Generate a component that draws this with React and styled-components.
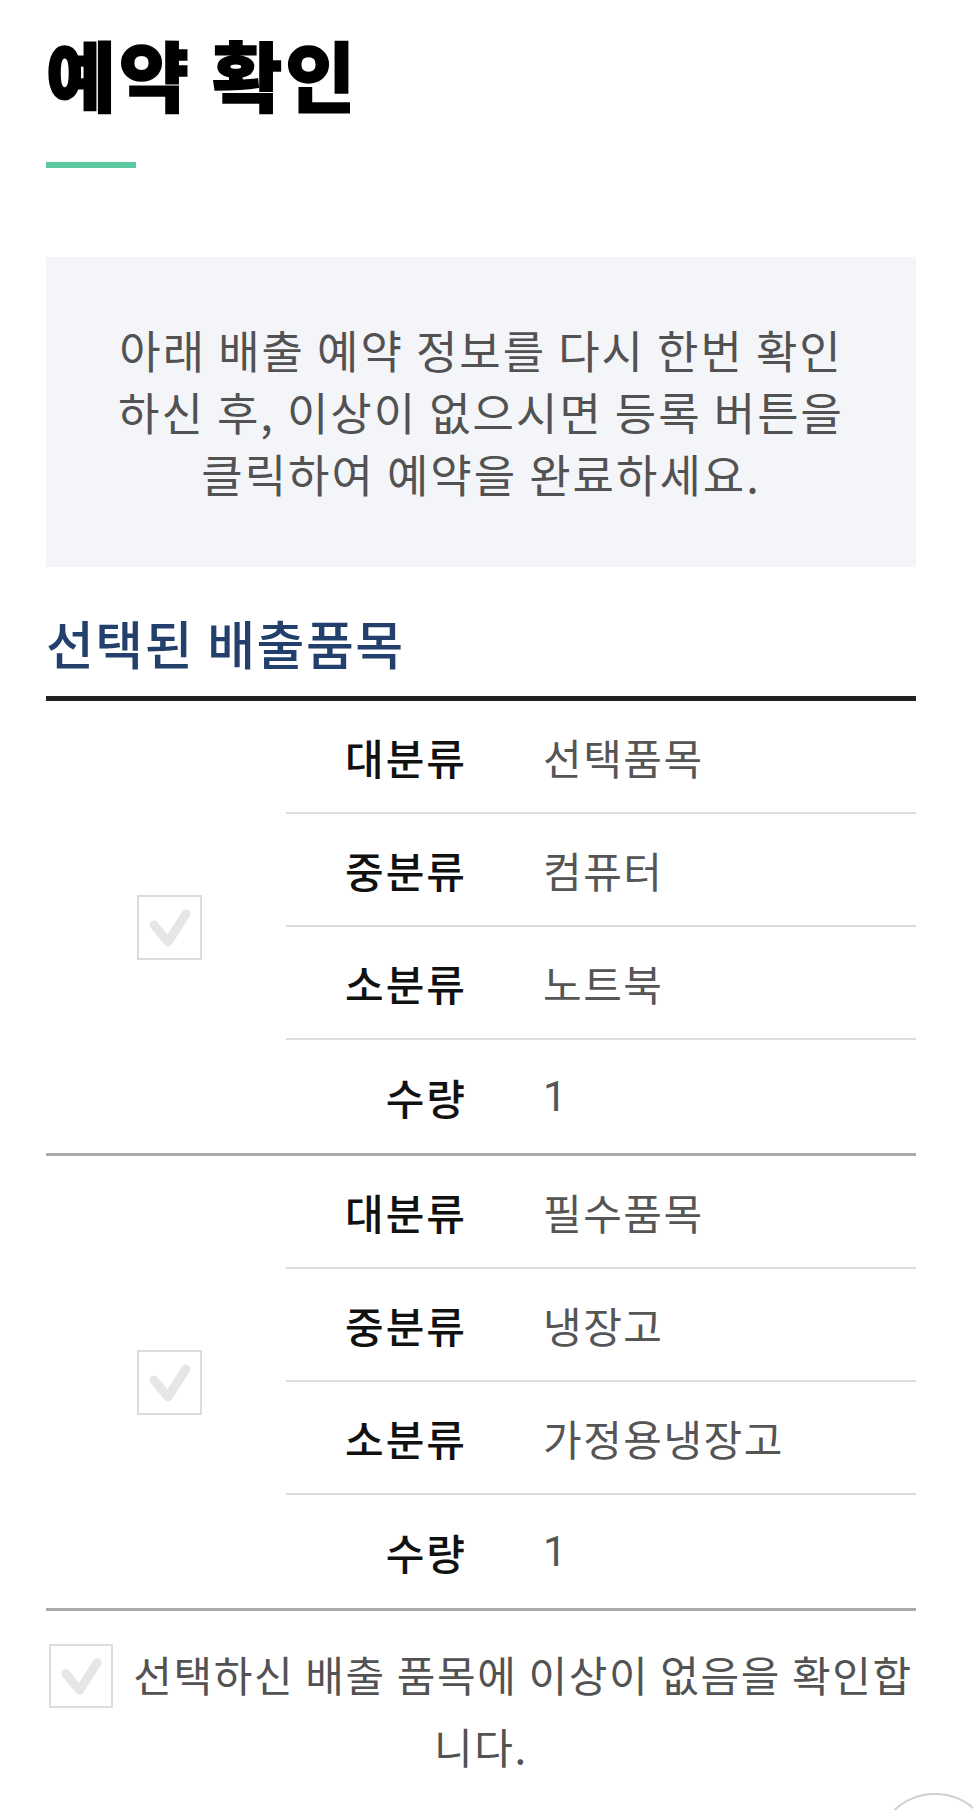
import React from "react";
import styled, { createGlobalStyle } from "styled-components";

const GlobalStyle = createGlobalStyle`
  html, body {
    margin: 0;
    padding: 0;
    background: #fff;
    overflow-x: hidden;
  }
  body {
    font-family: "Noto Sans CJK KR", "Noto Sans", sans-serif;
  }
`;

const items = [
  [
    ["대분류", "선택품목"],
    ["중분류", "컴퓨터"],
    ["소분류", "노트북"],
    ["수량", "1"],
  ],
  [
    ["대분류", "필수품목"],
    ["중분류", "냉장고"],
    ["소분류", "가정용냉장고"],
    ["수량", "1"],
  ],
];

const CheckMark = ({ size = 65 }) => (
  <CheckBox $size={size}>
    <svg width={size - 4} height={size - 4} viewBox="0 0 61 61">
      <path
        d="M15 28 L29 45 L47 17"
        fill="none"
        stroke="#e6e6e6"
        strokeWidth="9"
        strokeLinecap="round"
        strokeLinejoin="round"
      />
    </svg>
  </CheckBox>
);

const App = () => {
  return (
    <>
      <GlobalStyle />
      <Page>
        <Title>예약 확인</Title>
        <TitleBar />
        <Notice>
          아래 배출 예약 정보를 다시 한번 확인하신 후, 이상이 없으시면 등록
          버튼을 클릭하여 예약을 완료하세요.
        </Notice>
        <SectionTitle>선택된 배출품목</SectionTitle>
        <Table>
          {items.map((group, i) => (
            <Group key={i}>
              <CheckCell>
                <CheckMark />
              </CheckCell>
              <Rows>
                {group.map(([label, value]) => (
                  <Row key={label}>
                    <Label>{label}</Label>
                    <Value>{value}</Value>
                  </Row>
                ))}
              </Rows>
            </Group>
          ))}
        </Table>
        <Confirm>
          <CheckMark size={64} />
          선택하신 배출 품목에 이상이 없음을 확인합니다.
        </Confirm>
      </Page>
      <TopButton />
    </>
  );
};

export default App;

const Page = styled.div`
  width: 870px;
  margin-left: 46px;
  padding: 35px 0 60px;
`;

const Title = styled.h1`
  margin: 0;
  font-size: 76px;
  line-height: 1;
  font-weight: 900;
  color: #000;
  letter-spacing: 3px;
  -webkit-text-stroke: 1.5px #000;
`;

const TitleBar = styled.div`
  width: 90px;
  height: 6px;
  margin-top: 51px;
  background: #5ec9a0;
`;

const Notice = styled.p`
  margin: 89px 0 0;
  padding: 62px 60px;
  background: #f4f5f9;
  color: #525252;
  font-size: 45px;
  letter-spacing: 2px;
  line-height: 62px;
  text-align: center;
`;

const SectionTitle = styled.h2`
  margin: 50px 0 27px;
  font-size: 52px;
  line-height: 1;
  font-weight: 500;
  letter-spacing: 1.5px;
  color: #22406b;
`;

const Table = styled.div`
  border-top: 5px solid #222;
`;

const Group = styled.div`
  display: grid;
  grid-template-columns: 240px 1fr;
  border-bottom: 3px solid #aaa;
`;

const CheckCell = styled.div`
  display: flex;
  align-items: center;
  justify-content: center;
  padding-left: 6px;
`;

const CheckBox = styled.span`
  display: inline-flex;
  align-items: center;
  justify-content: center;
  box-sizing: border-box;
  width: ${(p) => p.$size}px;
  height: ${(p) => p.$size}px;
  border: 2px solid #dcdcdc;
  background: #fff;
  vertical-align: middle;
`;

const Rows = styled.div`
  display: flex;
  flex-direction: column;
`;

const Row = styled.div`
  display: grid;
  grid-template-columns: 181px 1fr;
  column-gap: 76px;
  align-items: center;
  height: 113px;
  box-sizing: border-box;
  border-bottom: 2px solid #ddd;

  &:last-child {
    border-bottom: none;
  }
`;

const Label = styled.span`
  text-align: right;
  font-size: 42px;
  letter-spacing: 2px;
  font-weight: 500;
  color: #111;
`;

const Value = styled.span`
  font-family: "Roboto", "Noto Sans CJK KR", sans-serif;
  font-size: 42px;
  letter-spacing: 1.5px;
  color: #555;
`;

const Confirm = styled.p`
  margin: 27px 0 0;
  font-size: 42px;
  letter-spacing: 1.6px;
  line-height: 72px;
  color: #525252;
  text-align: center;

  & > span {
    margin-right: 20px;
    vertical-align: -14px;
  }
`;

const TopButton = styled.div`
  position: fixed;
  right: -22px;
  bottom: -103px;
  width: 120px;
  height: 120px;
  box-sizing: border-box;
  border-radius: 50%;
  border: 2px solid #d0d0d0;
  background: #fff;
`;
